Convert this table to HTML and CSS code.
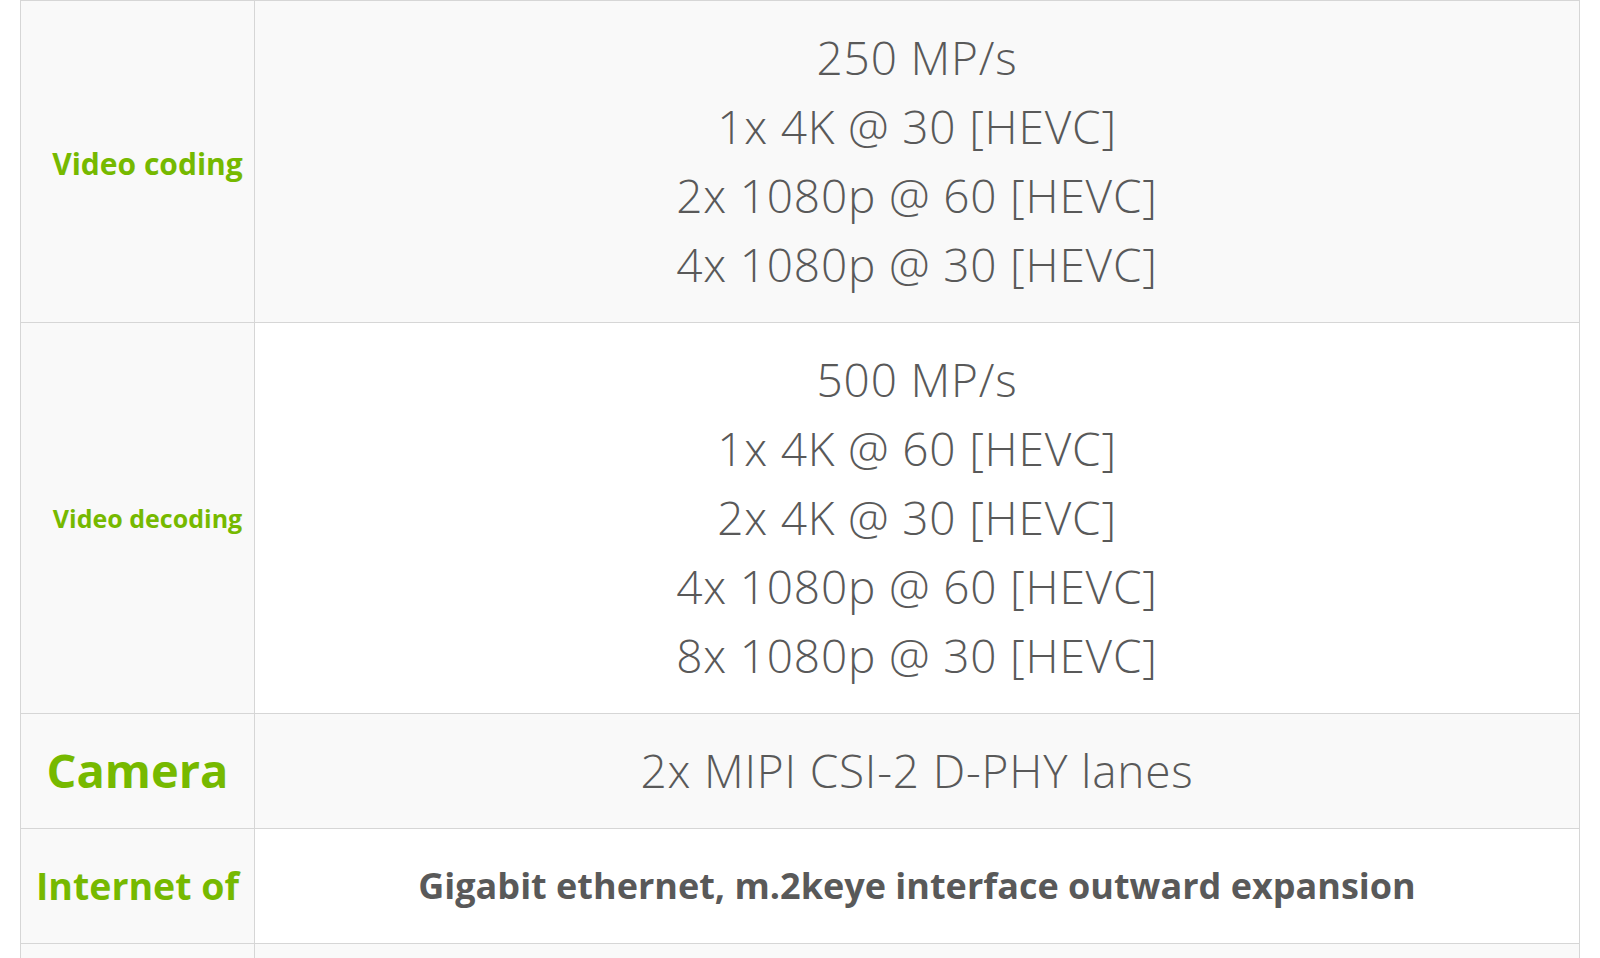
FILE: index.html
```html
<!DOCTYPE html>
<html lang="en">
<head>
<meta charset="utf-8">
<title>Specifications</title>
<link rel="stylesheet" href="styles.css">
</head>
<body>
<table class="spec">
  <colgroup>
    <col class="spec__col-label">
    <col class="spec__col-value">
  </colgroup>
  <tbody>
    <tr class="spec__row spec__row--shaded">
      <th class="spec__label spec__label--shift spec__label--md">Video coding</th>
      <td class="spec__value">250 MP/s<br>1x 4K @ 30 [HEVC]<br>2x 1080p @ 60 [HEVC]<br>4x 1080p @ 30 [HEVC]</td>
    </tr>
    <tr class="spec__row">
      <th class="spec__label spec__label--shift spec__label--sm">Video decoding</th>
      <td class="spec__value">500 MP/s<br>1x 4K @ 60 [HEVC]<br>2x 4K @ 30 [HEVC]<br>4x 1080p @ 60 [HEVC]<br>8x 1080p @ 30 [HEVC]</td>
    </tr>
    <tr class="spec__row spec__row--shaded">
      <th class="spec__label spec__label--xl">Camera</th>
      <td class="spec__value">2x MIPI CSI-2 D-PHY lanes</td>
    </tr>
    <tr class="spec__row">
      <th class="spec__label spec__label--lg">Internet of</th>
      <td class="spec__value spec__value--bold">Gigabit ethernet, m.2keye interface outward expansion</td>
    </tr>
    <tr class="spec__row spec__row--shaded spec__row--tail">
      <th class="spec__label">&nbsp;</th>
      <td class="spec__value">&nbsp;</td>
    </tr>
  </tbody>
</table>
</body>
</html>
```

FILE: styles.css
```css
html, body {
  margin: 0;
  padding: 0;
  background: #ffffff;
}

body {
  padding: 0 20px;
  font-family: "Open Sans", "Liberation Sans", sans-serif;
}

.spec {
  width: 1560px;
  border-collapse: collapse;
  table-layout: fixed;
}

.spec__col-label {
  width: 234px;
}

.spec__row {
  background: #ffffff;
}

.spec__row--shaded {
  background: #f9f9f9;
}

.spec__label,
.spec__value {
  border: 1px solid #d6d6d6;
  padding: 22px 0 23px;
  vertical-align: middle;
}

.spec__label {
  background: #f9f9f9;
  color: #76b900;
  font-weight: 700;
  text-align: center;
  line-height: 1.2;
  white-space: nowrap;
}

.spec__label--shift {
  padding-left: 20px;
}

.spec__label--md {
  font-size: 30px;
  padding-top: 28px;
}

.spec__label--sm {
  font-size: 25px;
}

.spec__label--xl {
  font-size: 47px;
}

.spec__label--lg {
  font-size: 37.5px;
}

.spec__value {
  color: #595959;
  font-size: 46px;
  font-weight: 300;
  line-height: 69px;
  letter-spacing: 0.8px;
  text-align: center;
}

.spec__value--bold {
  font-size: 36px;
  font-weight: 700;
  letter-spacing: 0;
}

.spec__row--tail .spec__label,
.spec__row--tail .spec__value {
  background: #f9f9f9;
}
```
